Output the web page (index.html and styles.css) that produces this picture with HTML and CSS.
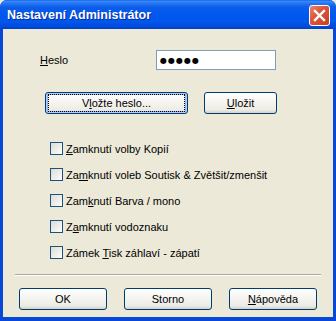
FILE: index.html
```html
<!DOCTYPE html>
<html>
<head>
<meta charset="utf-8">
<link rel="stylesheet" href="styles.css">
</head>
<body>
<div class="window">
  <div class="titlebar">
    <span class="title">Nastavení Administrátor</span>
    <div class="close">
      <svg width="13" height="13" viewBox="0 0 13 13"><path d="M2 2 L11 11 M11 2 L2 11" stroke="#fff" stroke-width="2.4" stroke-linecap="square"/></svg>
    </div>
  </div>
  <div class="client">
    <div class="row-pass">
      <span class="label"><u>H</u>eslo</span>
      <div class="field"><span class="dots">●●●●●</span></div>
    </div>
    <div class="row-btns">
      <div class="btn default wide"><span class="focus">V<u>l</u>ožte heslo...</span></div>
      <div class="btn save"><u>U</u>ložit</div>
    </div>
    <div class="checks">
      <div class="check"><span class="box"></span><span><u>Z</u>amknutí volby Kopií</span></div>
      <div class="check"><span class="box"></span><span>Za<u>m</u>knutí voleb Soutisk &amp; Zvětšit/zmenšit</span></div>
      <div class="check"><span class="box"></span><span>Zam<u>k</u>nutí Barva / mono</span></div>
      <div class="check"><span class="box"></span><span>Z<u>a</u>mknutí vodoznaku</span></div>
      <div class="check"><span class="box"></span><span>Zámek <u>T</u>isk záhlaví - zápatí</span></div>
    </div>
    <div class="sep"></div>
    <div class="row-bottom">
      <div class="btn bottom">OK</div>
      <div class="btn bottom">Storno</div>
      <div class="btn bottom"><u>N</u>ápověda</div>
    </div>
  </div>
</div>
</body>
</html>
```
FILE: styles.css
```css
html, body {
  margin: 0;
  padding: 0;
  background: #ece9d8;
}
.window {
  width: 336px;
  height: 321px;
  display: flex;
  flex-direction: column;
  background: #0848d8;
  border-radius: 7px 7px 0 0;
  overflow: hidden;
  font-family: "Liberation Sans", Arial, sans-serif;
  font-size: 11px;
  color: #000;
}
.titlebar {
  height: 29px;
  flex: 0 0 29px;
  display: flex;
  align-items: center;
  justify-content: space-between;
  padding: 0 6px 0 7px;
  box-sizing: border-box;
  background: linear-gradient(to bottom, #0a56e0 0px, #3a8cfb 1px, #2a78f4 3px, #0c5ee8 7px, #0058ee 14px, #0156ec 22px, #0049d8 27px, #003fc2 29px);
}
.title {
  color: #fff;
  font-weight: bold;
  font-size: 12.5px;
  text-shadow: 1px 1px 0 #0a2a9c;
  letter-spacing: 0;
  margin-top: 1px;
}
.close {
  width: 21px;
  height: 21px;
  box-sizing: border-box;
  border: 1px solid #fff;
  border-radius: 3px;
  background: linear-gradient(135deg, #e8876a 0%, #e0553a 40%, #c83e20 100%);
  display: flex;
  align-items: center;
  justify-content: center;
  margin-top: 1px;
}
.client {
  flex: 1;
  margin: 0 3px 4px 3px;
  background: #ece9d8;
  display: flex;
  flex-direction: column;
  padding-top: 21px;
}
.row-pass {
  display: flex;
  align-items: center;
  margin-left: 37px;
  height: 20px;
}
.label {
  width: 116px;
}
.field {
  width: 120px;
  height: 20px;
  box-sizing: border-box;
  border: 1px solid #7f9db9;
  background: #fff;
  display: flex;
  align-items: center;
  padding-left: 3px;
}
.dots {
  font-family: "DejaVu Sans", sans-serif;
  font-size: 8px;
  letter-spacing: 1px;
}
.row-btns {
  display: flex;
  margin-left: 42px;
  margin-top: 22px;
  gap: 16px;
}
.btn {
  height: 22px;
  box-sizing: border-box;
  border: 1px solid #003c74;
  border-radius: 3px;
  background: linear-gradient(to bottom, #ffffff 0%, #f4f3ee 50%, #ecebe6 85%, #d6d0c5 100%);
  display: flex;
  align-items: center;
  justify-content: center;
}
.wide {
  width: 143px;
}
.default {
  box-shadow: inset 0 0 0 1px #b6cef5, inset 0 0 0 2px #8cb4f2;
}
.focus {
  padding: 2px 0;
  width: 135px;
  text-align: center;
  outline: 1px dotted #000;
  line-height: 12px;
}
.save {
  width: 73px;
}
.checks {
  display: flex;
  flex-direction: column;
  gap: 13px;
  margin-left: 47px;
  margin-top: 28px;
}
.check {
  display: flex;
  align-items: center;
  height: 13px;
}
.box {
  width: 13px;
  height: 13px;
  box-sizing: border-box;
  border: 1px solid #1c5180;
  background: linear-gradient(135deg, #dcdcd7 0%, #f0f0ea 60%, #ffffff 100%);
  margin-right: 3px;
}
.sep {
  margin: 15px 12px 0 12px;
  height: 1px;
  background: #aca899;
  border-bottom: 1px solid #fff;
}
.row-bottom {
  display: flex;
  margin: 12px 0 0 16px;
  gap: 17px;
}
.bottom {
  width: 88px;
}
```
